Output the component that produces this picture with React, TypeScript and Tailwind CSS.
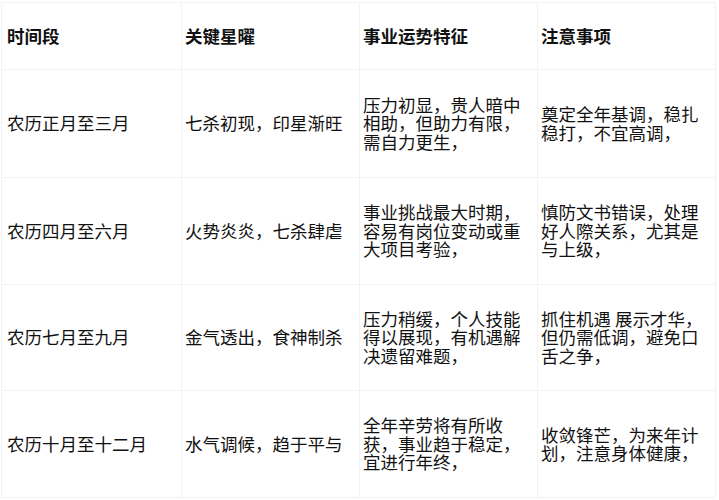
const rows = [
  {
    period: "农历正月至三月",
    stars: "七杀初现，印星渐旺",
    career: "压力初显，贵人暗中相助，但助力有限，需自力更生，",
    notes: "奠定全年基调，稳扎稳打，不宜高调，",
    h: "h-[108px]",
  },
  {
    period: "农历四月至六月",
    stars: "火势炎炎，七杀肆虐",
    career: "事业挑战最大时期，容易有岗位变动或重大项目考验，",
    notes: "慎防文书错误，处理好人際关系，尤其是与上级，",
    h: "h-[107px]",
  },
  {
    period: "农历七月至九月",
    stars: "金气透出，食神制杀",
    career: "压力稍缓，个人技能得以展现，有机遇解决遗留难题，",
    notes: "抓住机遇 展示才华，但仍需低调，避免口舌之争，",
    h: "h-[106px]",
  },
  {
    period: "农历十月至十二月",
    stars: "水气调候，趋于平与",
    career: "全年辛劳将有所收获，事业趋于稳定，宜进行年终，",
    notes: "收敛锋芒，为来年计划，注意身体健康，",
    h: "h-[107px]",
  },
];

const cell = "border border-[#f3f3f3] px-[3px] align-middle";

export default function App() {
  return (
    <div className="w-[719px] h-[500px] bg-white pt-[2px] pl-[1px] font-['Noto_Sans_CJK_SC',sans-serif] text-[#111] text-[17.5px] leading-[18.5px]">
      <table className="table-fixed border-collapse w-[714px]">
        <colgroup>
          <col className="w-[180px]" />
          <col className="w-[178px]" />
          <col className="w-[178px]" />
          <col className="w-[178px]" />
        </colgroup>
        <thead>
          <tr className="h-[67px]">
            <th className={`${cell} text-left font-bold pl-[5px]`}>时间段</th>
            <th className={`${cell} text-left font-bold`}>关键星曜</th>
            <th className={`${cell} text-left font-bold`}>事业运势特征</th>
            <th className={`${cell} text-left font-bold`}>注意事项</th>
          </tr>
        </thead>
        <tbody>
          {rows.map((r) => (
            <tr key={r.period} className={r.h}>
              <td className={`${cell} pl-[5px]`}>{r.period}</td>
              <td className={cell}>{r.stars}</td>
              <td className={cell}>{r.career}</td>
              <td className={cell}>{r.notes}</td>
            </tr>
          ))}
        </tbody>
      </table>
    </div>
  );
}
